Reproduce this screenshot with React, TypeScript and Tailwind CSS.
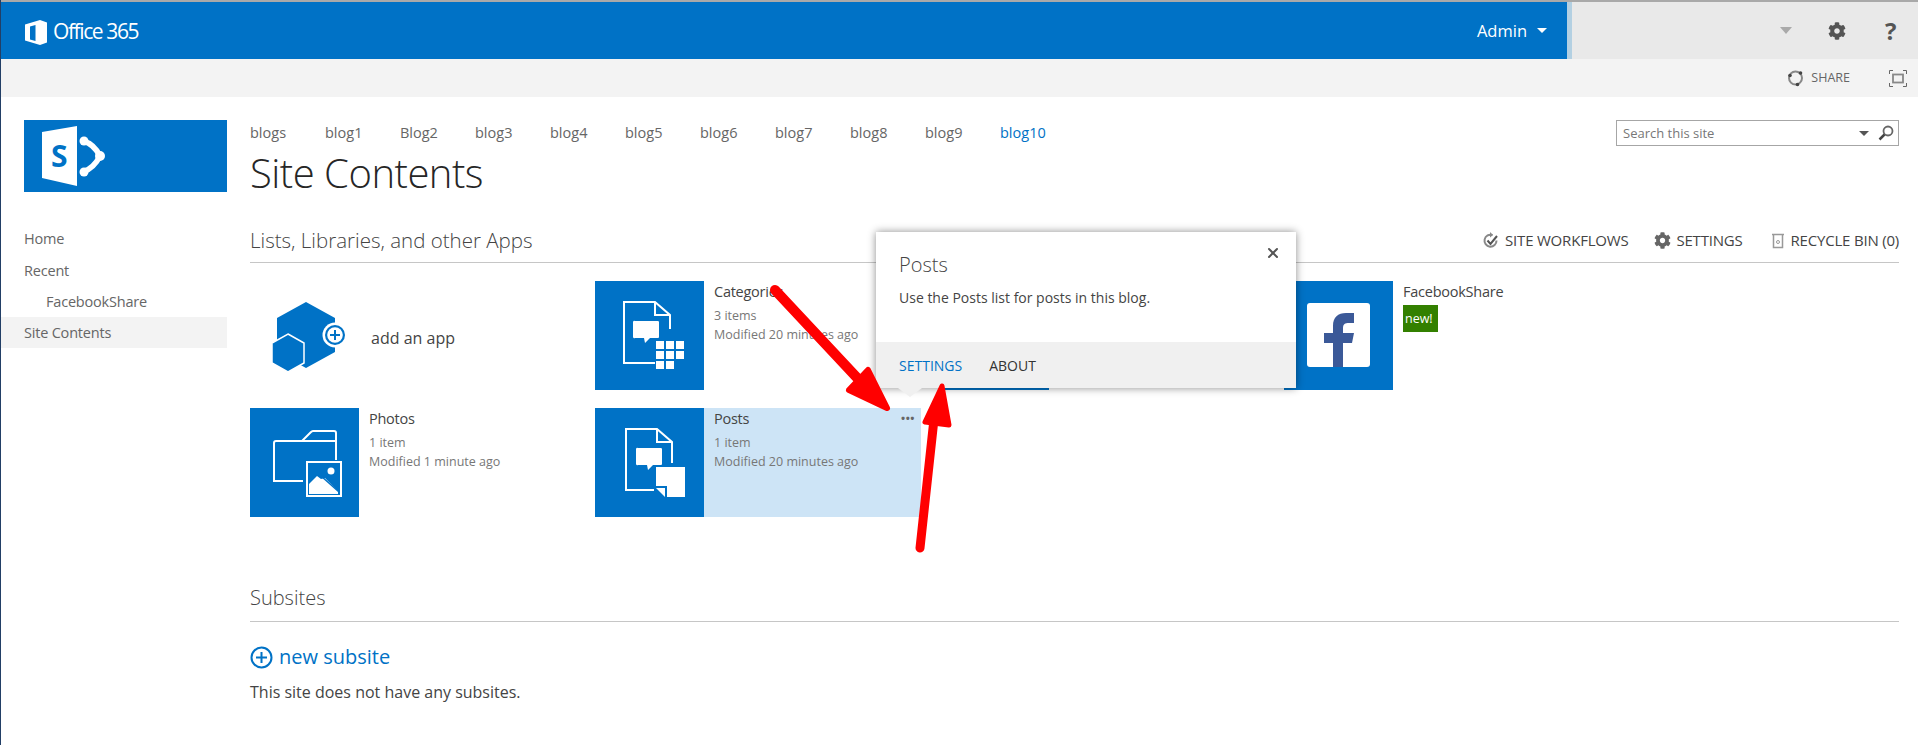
import { X } from "lucide-react"
import { FaCog } from "react-icons/fa"

const blogs = ["blogs", "blog1", "Blog2", "blog3", "blog4", "blog5", "blog6", "blog7", "blog8", "blog9"]

function OfficeLogo() {
  return (
    <svg className="mt-[4px]" width="23" height="25" viewBox="0 0 23 25" fill="none">
      <path d="M0 4.500 15 0l7 2.500v20L15 25 0 20.500Z" fill="#fff" />
      <path d="M5 6.500 10.500 5v16L5 19.500Z" fill="#0072c6" />
    </svg>
  )
}

function SharePointLogo() {
  return (
    <svg width="64" height="62" viewBox="0 0 64 62" fill="none">
      <path d="M0 7 35 1v60L0 53Z" fill="#fff" />
      <path d="M41 16Q52 19 58 31 52 43 41 47" stroke="#fff" strokeWidth="5.500" />
      <circle cx="42" cy="16" r="4.500" fill="#fff" />
      <circle cx="58" cy="31" r="5" fill="#fff" />
      <circle cx="42" cy="47" r="4.500" fill="#fff" />
      <text x="9" y="42" fontFamily="'Open Sans', sans-serif" fontWeight="700" fontSize="30" fill="#0072c6">
        S
      </text>
    </svg>
  )
}

function AddAppIcon() {
  return (
    <svg width="90" height="72" viewBox="0 0 90 72" fill="none">
      <path d="M35 0 64 16v34L35 66 6 50V16Z" fill="#0072c6" />
      <circle cx="64" cy="33" r="12.500" fill="#fff" />
      <circle cx="64" cy="33" r="10" fill="#0072c6" />
      <circle cx="64" cy="33" r="7.800" fill="#fff" />
      <path d="M64 28v10M59 33h10" stroke="#0072c6" strokeWidth="2" />
      <path d="M17 32 33 41v20l-16 9-16-9V41Z" fill="#0072c6" stroke="#fff" strokeWidth="1.500" />
    </svg>
  )
}

function TileCategories() {
  return (
    <svg width="109" height="109" viewBox="0 0 109 109" fill="none">
      <path d="M75 48V34L60 21H29v61h31M60 21v13h15" stroke="#fff" strokeWidth="2" />
      <path d="M40 40h23a1.500 1.500 0 0 1 1 1v15a1 1 0 0 1-1 1H55l-5 5-1-5h-9a1.500 1.500 0 0 1-2-1V41a1.500 1.500 0 0 1 2-1Z" fill="#fff" />
      <g fill="#fff">
        <rect x="61" y="60" width="8" height="8" />
        <rect x="71" y="60" width="8" height="8" />
        <rect x="81" y="60" width="8" height="8" />
        <rect x="61" y="70" width="8" height="8" />
        <rect x="71" y="70" width="8" height="8" />
        <rect x="81" y="70" width="8" height="8" />
        <rect x="61" y="80" width="8" height="8" />
        <rect x="71" y="80" width="8" height="8" />
      </g>
    </svg>
  )
}

function TilePosts() {
  return (
    <svg width="109" height="109" viewBox="0 0 109 109" fill="none">
      <path d="M77 55V34L62 21H31v61h28M62 21v13h15" stroke="#fff" strokeWidth="2" />
      <path d="M43 40h23a1.500 1.500 0 0 1 1 1v15a1 1 0 0 1-1 1H58l-5 5-1-5h-9a1.500 1.500 0 0 1-2-1V41a1.500 1.500 0 0 1 2-1Z" fill="#fff" />
      <path d="M61 59h29v30H72V78H61Z" fill="#fff" />
      <path d="M61 80h9v9Z" fill="#fff" />
    </svg>
  )
}

function TilePhotos() {
  return (
    <svg width="109" height="109" viewBox="0 0 109 109" fill="none">
      <path d="M53 73H24V35a2 2 0 0 1 2-2h26l9-9a3 3 0 0 1 2-1h21a2 2 0 0 1 2 2v27M52 33h33" stroke="#fff" strokeWidth="2" />
      <rect x="57" y="54" width="34" height="34" stroke="#fff" strokeWidth="2" />
      <circle cx="81" cy="63" r="3.500" fill="#fff" />
      <path d="M59 86V76l8-8 4 3 4-1 13 13v3Z" fill="#fff" />
      <path d="M71 68 89 84" stroke="#0072c6" strokeWidth="1.500" />
    </svg>
  )
}

function TileFacebook() {
  return (
    <svg width="109" height="109" viewBox="0 0 109 109" fill="none">
      <rect x="23" y="22" width="63" height="64" rx="3" fill="#fff" />
      <path d="M49 86V62h-9V52h9v-7c0-9 5-13 13-13h8v10h-5c-4 0-6 1-6 5v5h11l-2 10h-9v24Z" fill="#3b5998" />
    </svg>
  )
}

function Tile({ icon, title, meta, modified, active, badge }: { icon?: React.ReactNode; title?: string; meta?: string; modified?: string; active?: boolean; badge?: boolean }) {
  return (
    <div className={active ? "relative flex h-[109px] w-[326px] bg-[#cde4f6]" : "relative flex h-[109px] w-[326px]"}>
      <div className="h-[109px] w-[109px] shrink-0 bg-[#0072c6]">{icon}</div>
      {title && (
        <div className="pl-[10px]">
          <p className="mt-[1px] text-[14.500px] leading-[20px] tracking-[-0.25px] text-[#444]">{title}</p>
          {meta && <p className="mt-[4px] text-[12.500px] leading-[19px] text-[#777]">{meta}</p>}
          {modified && <p className="text-[12.500px] leading-[19px] text-[#777]">{modified}</p>}
          {badge && <span className="mt-[3px] block h-[27px] w-[35px] bg-[#338000] px-[2px] text-[12.500px] leading-[27px] text-white">new!</span>}
        </div>
      )}
      {active && <span className="absolute right-[6px] top-[2px] text-[11px] font-bold leading-[16px] tracking-[0.5px] text-[#666]">•••</span>}
    </div>
  )
}

export default function App() {
  return (
    <div className="relative h-[745px] w-[1918px] overflow-hidden border-l border-[#223f66] bg-white font-['Open_Sans',sans-serif]">
      {/* suite bar */}
      <div className="flex h-[59px] border-t-2 border-[#a9a9a9]">
        <div className="flex w-[1566px] items-center bg-[#0072c6] pl-[24px] text-white">
          <OfficeLogo />
          <span className="ml-[5px] mt-[3px] text-[21px] tracking-[-1.400px]">Office 365</span>
          <span className="ml-auto mt-[1px] text-[16.500px]">Admin</span>
          <span className="ml-[10px] mr-[20px] h-0 w-0 border-x-[5.500px] border-t-[5px] border-x-transparent border-t-white" />
        </div>
        <div className="w-[5px] bg-[#b3d0e2]" />
        <div className="relative flex flex-1 items-center bg-[#e9e9e9]">
          <span className="ml-[208px] h-0 w-0 border-x-[6px] border-t-[7px] border-x-transparent border-t-[#aaa]" />
          <FaCog className="ml-[36px] h-[18px] w-[18px] text-[#555]" />
          <span className="ml-[39px] text-[24px] font-bold leading-none text-[#555]">?</span>
        </div>
      </div>

      {/* share bar */}
      <div className="flex h-[38px] items-center justify-end bg-[#f3f3f3]">
        <svg width="17" height="18" viewBox="0 0 17 18" fill="none">
          <circle cx="8.500" cy="9" r="6.500" stroke="#888" strokeWidth="2" />
          <circle cx="13.500" cy="4" r="1.800" fill="#444" />
          <circle cx="3" cy="6.500" r="1.800" fill="#444" />
          <circle cx="10.500" cy="15.500" r="1.800" fill="#444" />
        </svg>
        <span className="ml-[7px] text-[12.500px] text-[#666]">SHARE</span>
        <svg className="ml-[39px] mr-[11px]" width="18" height="17" viewBox="0 0 18 17" fill="none">
          <rect x="4" y="4.500" width="10" height="8" stroke="#888" strokeWidth="1.800" />
          <path d="M.5 4V.5H4M14 .5h3.500V4M.5 13v3.500H4M14 16.500h3.500V13" stroke="#666" />
        </svg>
      </div>

      <div className="flex">
        {/* left nav */}
        <div className="w-[226px] shrink-0 pt-[23px]">
          <div className="ml-[23px] flex h-[72px] w-[203px] items-center bg-[#0072c6] pl-[18px]">
            <SharePointLogo />
          </div>
          <nav className="mt-[32px] text-[14.500px] tracking-[-0.2px] text-[#666]">
            <p className="flex h-[31px] items-center pb-[1px] pl-[23px]">Home</p>
            <p className="flex h-[31px] items-center pl-[23px]">Recent</p>
            <p className="flex h-[31px] items-center pl-[45px]">FacebookShare</p>
            <p className="flex h-[31px] items-center bg-[#f3f3f3] pl-[23px]">Site Contents</p>
          </nav>
        </div>

        {/* main column */}
        <div className="flex-1 pl-[23px] pr-[19px]">
          <div className="flex items-start justify-between pt-[23px]">
            <div className="flex items-center pt-[2px] text-[14.500px] text-[#666]">
              {blogs.map((b) => (
                <span key={b} className="w-[75px]">{b}</span>
              ))}
              <span className="font-medium text-[#0072c6]">blog10</span>
            </div>
            <div className="flex h-[26px] w-[283px] items-center border border-[#a6a6a6] pl-[6px] pr-[4px] text-[13px] text-[#777]">
              <span className="pt-[2px]">Search this site</span>
              <span className="ml-auto h-0 w-0 border-x-[5px] border-t-[5px] border-x-transparent border-t-[#555]" />
              <svg className="ml-[9px]" width="16" height="16" viewBox="0 0 16 16" fill="none">
                <circle cx="10" cy="6" r="4.500" stroke="#666" strokeWidth="1.800" />
                <path d="M6.500 9.500 1.500 14.500" stroke="#444" strokeWidth="2.500" />
              </svg>
            </div>
          </div>

          <h1 className="mt-[2px] text-[40px] font-light leading-[50px] tracking-[-0.5px] text-[#262626]">Site Contents</h1>

          <div className="mt-[25px] flex h-[40px] items-center justify-between border-b border-[#c6c6c6] pb-[4px]">
            <h2 className="text-[20.500px] font-light text-[#444]">Lists, Libraries, and other Apps</h2>
            <div className="flex items-center text-[15px] tracking-[-0.2px] text-[#444]">
              <svg width="18" height="18" viewBox="0 0 18 18" fill="none">
                <path d="M14.500 8.500a6 6 0 1 1-4-5.500" stroke="#888" strokeWidth="2" />
                <path d="M8 0 11 3 8 5.500Z" fill="#888" />
                <path d="M5.500 8.500 8.500 12 15 4" stroke="#555" strokeWidth="2" />
              </svg>
              <span className="ml-[5px]">SITE WORKFLOWS</span>
              <FaCog className="ml-[26px] h-[17px] w-[17px] text-[#666]" />
              <span className="ml-[5px]">SETTINGS</span>
              <svg className="ml-[28px]" width="14" height="17" viewBox="0 0 14 17" fill="none">
                <path d="M1 2.500h12M2.500 3v12.500h9V3" stroke="#999" strokeWidth="1.500" />
                <circle cx="7" cy="10" r="1.500" stroke="#999" />
              </svg>
              <span className="ml-[6px]">RECYCLE BIN (0)</span>
            </div>
          </div>

          {/* app tiles */}
          <div className="mt-[18px] grid grid-cols-[345px_345px_344px_1fr] gap-y-[18px]">
            <div className="flex h-[109px] items-center pl-[21px] pt-[4px]">
              <AddAppIcon />
              <span className="ml-[10px] text-[16px] text-[#444]">add an app</span>
            </div>
            <Tile icon={<TileCategories />} title="Categories" meta="3 items" modified="Modified 20 minutes ago" />
            <Tile />
            <Tile icon={<TileFacebook />} title="FacebookShare" badge />
            <Tile icon={<TilePhotos />} title="Photos" meta="1 item" modified="Modified 1 minute ago" />
            <Tile icon={<TilePosts />} title="Posts" meta="1 item" modified="Modified 20 minutes ago" active />
          </div>

          {/* subsites */}
          <h2 className="mt-[65px] text-[20px] font-light leading-[32px] text-[#444]">Subsites</h2>
          <div className="mt-[7px] border-t border-[#c6c6c6]" />
          <div className="mt-[21px] flex items-center">
            <svg width="23" height="23" viewBox="0 0 23 23" fill="none">
              <circle cx="11.500" cy="11.500" r="10" stroke="#0072c6" strokeWidth="2" />
              <path d="M11.500 6v11M6 11.500h11" stroke="#0072c6" strokeWidth="2" />
            </svg>
            <span className="ml-[6px] text-[20px] leading-[28px] text-[#0072c6]">new subsite</span>
          </div>
          <p className="mt-[9px] text-[16px] leading-[24px] text-[#444]">This site does not have any subsites.</p>
        </div>
      </div>

      {/* callout over the tiles */}
      <div className="absolute left-[875px] top-[232px] h-[156px] w-[420px] bg-white shadow-[0_0_8px_rgba(0,0,0,0.45)]">
        <X className="absolute right-[15px] top-[13px] h-[16px] w-[16px] text-[#555]" strokeWidth={3} />
        <p className="ml-[23px] mt-[19px] text-[20px] font-light leading-[28px] text-[#444]">Posts</p>
        <p className="ml-[23px] mt-[9px] text-[14px] leading-[20px] text-[#444]">Use the Posts list for posts in this blog.</p>
        <div className="absolute inset-x-0 bottom-0 flex h-[46px] items-center gap-[27px] bg-[#f0f0f0] pl-[23px] text-[14px]">
          <span className="text-[#0072c6]">SETTINGS</span>
          <span className="text-[#333]">ABOUT</span>
        </div>
        <div className="absolute left-[22px] top-[156px] h-0 w-0 border-x-[12px] border-t-[9px] border-x-transparent border-t-[#f0f0f0]" />
      </div>

      {/* red annotation arrows */}
      <svg className="pointer-events-none absolute left-0 top-0" width="1918" height="745" viewBox="0 0 1918 745" fill="none">
        <path d="M774 290 860 382" stroke="#f00" strokeWidth="10" strokeLinecap="round" />
        <path d="M886 408 848 390 867 370Z" fill="#f00" stroke="#f00" strokeWidth="6" strokeLinejoin="round" />
        <path d="M919 548 934 410" stroke="#f00" strokeWidth="9" strokeLinecap="round" />
        <path d="M941 386 924 422 948 425Z" fill="#f00" stroke="#f00" strokeWidth="5" strokeLinejoin="round" />
      </svg>
    </div>
  )
}
